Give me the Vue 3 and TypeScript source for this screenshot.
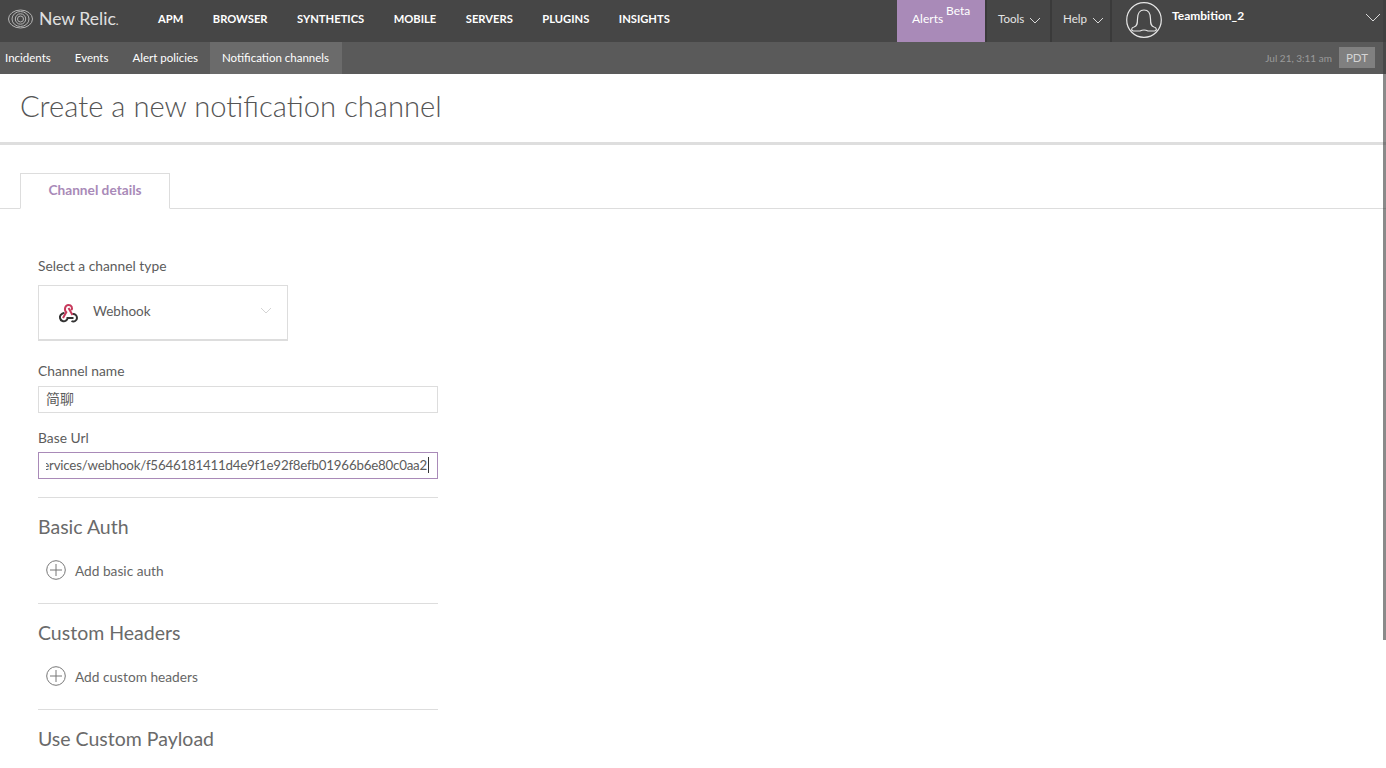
<template>
  <div class="page">
    <header class="topbar">
      <div class="brand">
        <svg class="brand-logo" width="25" height="20" viewBox="0 0 25 20" fill="none" stroke="#b5b5b5" stroke-width="1">
          <ellipse cx="12.500" cy="10" rx="12" ry="9" />
          <ellipse cx="12.500" cy="10" rx="8.500" ry="7.500" />
          <circle cx="12.500" cy="10" r="5.200" />
          <circle cx="12.500" cy="10" r="3" />
        </svg>
        <span class="brand-name">New Relic<small>.</small></span>
      </div>
      <nav class="main-nav">
        <a v-for="item in mainNav" :key="item">{{ item }}</a>
      </nav>
      <div class="top-right">
        <div class="alerts">Alerts<span class="beta">Beta</span></div>
        <div class="menu tools">Tools
          <svg class="chev" width="12" height="7" viewBox="0 0 12 7"><path d="M1 1l5 5 5-5" /></svg>
        </div>
        <div class="menu help">Help
          <svg class="chev" width="12" height="7" viewBox="0 0 12 7"><path d="M1 1l5 5 5-5" /></svg>
        </div>
        <div class="account">
          <svg class="avatar" width="36" height="36" viewBox="0 0 36 36" fill="none" stroke="#e6e6e6" stroke-width="1.200">
            <circle cx="18" cy="18" r="17.300" />
            <path d="M14 29H7.500C5 29 5 25.500 8 25c3-.7 3.500-3 3.500-8C11.500 11 14 8 18 8s6.500 3 6.500 9c0 5 .5 7.300 3.500 8 3 .5 3 4 .5 4H22Q18 27 14 29z" />
          </svg>
          <span class="account-name">Teambition_2</span>
          <svg class="account-chev" width="16" height="9" viewBox="0 0 16 9"><path d="M1 1l7 7 7-7" /></svg>
        </div>
      </div>
    </header>

    <div class="subbar">
      <nav class="sub-nav">
        <a v-for="item in subNav" :key="item" :class="{ active: item === 'Notification channels' }">{{ item }}</a>
      </nav>
      <div class="clock">
        <span>Jul 21, 3:11 am</span>
        <span class="tz">PDT</span>
      </div>
    </div>

    <h1 class="title">Create a new notification channel</h1>

    <div class="tabs">
      <div class="tab">Channel details</div>
    </div>

    <form class="form" @submit.prevent>
      <label class="label first">Select a channel type</label>
      <div class="select">
        <svg class="hook" width="21" height="20" viewBox="0 0 21 20" fill="none" stroke-width="2">
          <path d="M6.500 9.800C3 10.500 1.500 13 2 15c.5 3 4 4 6 2.500 1-.5 1.500-2 1.500-2.500h6" stroke="#333" />
          <path d="M14.500 11c2.500-.5 4.500 1.500 4.500 4s-3 4.500-5.500 3" stroke="#333" />
          <path d="M5 15l3.300-5.800C5.800 7 7 2 10.500 2c3 0 4.500 3 2.700 5.200" stroke="#c73a5c" />
          <path d="M10.500 5l4 7" stroke="#c73a5c" />
        </svg>
        <span class="select-text">Webhook</span>
        <svg class="select-chev" width="12" height="7" viewBox="0 0 12 7"><path d="M1 1l5 5 5-5" /></svg>
      </div>

      <label class="label name-label">Channel name</label>
      <div class="input">简聊</div>

      <label class="label url-label">Base Url</label>
      <div class="input focused">
        <div class="url-clip"><span class="url">services/webhook/f5646181411d4e9f1e92f8efb01966b6e80c0aa2</span></div>
        <span class="caret"></span>
      </div>

      <section class="block">
        <h2>Basic Auth</h2>
        <a class="add">
          <svg width="20" height="20" viewBox="0 0 20 20" fill="none" stroke="#777"><circle cx="10" cy="10" r="9.300" /><path d="M10 4v12M4 10h12" /></svg>
          Add basic auth
        </a>
      </section>

      <section class="block">
        <h2>Custom Headers</h2>
        <a class="add">
          <svg width="20" height="20" viewBox="0 0 20 20" fill="none" stroke="#777"><circle cx="10" cy="10" r="9.300" /><path d="M10 4v12M4 10h12" /></svg>
          Add custom headers
        </a>
      </section>

      <section class="block">
        <h2>Use Custom Payload</h2>
      </section>
    </form>

    <div class="scrollbar"></div>
  </div>
</template>

<script setup lang="ts">
const mainNav: string[] = ['APM', 'BROWSER', 'SYNTHETICS', 'MOBILE', 'SERVERS', 'PLUGINS', 'INSIGHTS']
const subNav: string[] = ['Incidents', 'Events', 'Alert policies', 'Notification channels']
</script>

<style>
html,
body {
  margin: 0;
  height: 768px;
  overflow: hidden;
  background: #fff;
}
</style>

<style scoped>
.page {
  position: relative;
  width: 1386px;
  height: 768px;
  overflow: hidden;
  font-family: Lato, "Noto Sans CJK SC", sans-serif;
  color: #5c5c5c;
}

.topbar {
  display: flex;
  height: 42px;
  background: #464646;
  color: #fff;
}
.brand {
  display: flex;
  align-items: center;
  width: 158px;
  height: 37px;
  padding-left: 8px;
  box-sizing: border-box;
}
.brand-logo {
  margin-right: 6px;
}
.brand-name {
  font-size: 17.600px;
  color: #e0e0e0;
}
.brand-name small {
  font-size: 12px;
}
.main-nav {
  display: flex;
  align-items: center;
  height: 37px;
  gap: 29.500px;
  font-size: 11.200px;
  font-weight: 700;
}
.top-right {
  display: flex;
  margin-left: auto;
  height: 42px;
}
.alerts {
  width: 88px;
  box-sizing: border-box;
  padding: 11px 0 0 15px;
  background: #a98ab8;
  font-size: 12px;
  position: relative;
}
.beta {
  position: absolute;
  left: 49px;
  top: 3px;
}
.menu {
  display: flex;
  align-items: center;
  gap: 5px;
  padding-bottom: 5px;
  box-sizing: border-box;
  font-size: 11.600px;
  color: #e4e4e4;
}
.tools {
  width: 65px;
  padding-left: 11px;
  border-left: 2px solid #3a3a3a;
}
.help {
  width: 60px;
  padding-left: 11px;
  border-left: 2px solid #3a3a3a;
}
.chev,
.account-chev,
.select-chev {
  fill: none;
  stroke: #d8d8d8;
  stroke-width: 1;
}
.chev {
  margin-top: 3px;
}
.account {
  display: flex;
  width: 276px;
  box-sizing: border-box;
  border-left: 2px solid #3a3a3a;
  padding-left: 14px;
}
.avatar {
  margin-top: 2px;
}
.account-name {
  margin: 8px 0 0 10px;
  font-size: 12px;
  font-weight: 700;
}
.account-chev {
  margin: 13px 5px 0 auto;
}

.subbar {
  display: flex;
  justify-content: space-between;
  height: 32px;
  background: #5a5a5a;
  color: #fff;
}
.sub-nav {
  display: flex;
  font-size: 11.500px;
}
.sub-nav a {
  display: flex;
  align-items: center;
  height: 30px;
  padding: 0 12px 2px;
}
.sub-nav a:first-child {
  padding-left: 5px;
}
.sub-nav a.active {
  padding-right: 13px;
  background: #6b6b6b;
}
.clock {
  display: flex;
  align-items: center;
  gap: 7px;
  padding: 0 11px 1px 0;
  font-size: 10px;
  color: #9a9a9a;
}
.tz {
  padding: 4px 7px;
  background: #808080;
  font-size: 11.500px;
  color: #d4d4d4;
}

.title {
  margin: 0;
  height: 71px;
  box-sizing: border-box;
  padding: 14px 0 0 20px;
  border-bottom: 3px solid #dedede;
  font-size: 29.200px;
  font-weight: 300;
  color: #555;
}

.tabs {
  height: 64px;
  box-sizing: border-box;
  padding: 28px 0 0 20px;
  border-bottom: 1px solid #ddd;
}
.tab {
  width: 150px;
  height: 36px;
  box-sizing: border-box;
  padding-top: 7px;
  border: 1px solid #ddd;
  border-bottom: 1px solid #fff;
  background: #fff;
  text-align: center;
  font-size: 13.700px;
  font-weight: 700;
  color: #a98ab8;
}

.form {
  width: 400px;
  margin-left: 38px;
  font-size: 13.800px;
}
.label {
  display: block;
  line-height: 16px;
}
.first {
  margin-top: 49px;
}
.select {
  display: flex;
  align-items: center;
  width: 250px;
  height: 56px;
  margin-top: 11px;
  box-sizing: border-box;
  padding: 0 15px 0 19px;
  border: 1px solid #ddd;
  border-bottom-width: 2px;
  font-size: 13.500px;
}
.hook {
  margin-right: 14px;
}
.select-text {
  margin-bottom: 4px;
}
.select-chev {
  margin: 0 0 4px auto;
  stroke: #d4d4d4;
}
.name-label {
  margin-top: 22px;
}
.input {
  display: flex;
  align-items: center;
  height: 27px;
  margin-top: 7px;
  box-sizing: border-box;
  padding: 0 7px 4px;
  border: 1px solid #ddd;
  font-size: 14px;
}
.url-label {
  margin-top: 17px;
}
.focused {
  margin-top: 6px;
  padding-bottom: 2px;
  padding-right: 8px;
  border-color: #a98ab8;
}
.url-clip {
  display: flex;
  justify-content: flex-end;
  flex: 1;
  min-width: 0;
  overflow: hidden;
}
.url {
  flex: none;
  white-space: nowrap;
  font-size: 13.300px;
  letter-spacing: -0.200px;
}
.caret {
  width: 1px;
  height: 16px;
  margin-left: 1px;
  background: #333;
  flex: none;
}
.block {
  margin-top: 18px;
  border-top: 1px solid #ddd;
  height: 87px;
}
.block h2 {
  margin: 17px 0 0;
  font-size: 19.500px;
  font-weight: 400;
  line-height: 24px;
  color: #6a6a6a;
}
.add {
  display: flex;
  align-items: center;
  gap: 9px;
  margin: 21px 0 0 8px;
  font-size: 13.700px;
  color: #666;
}

.scrollbar {
  position: absolute;
  top: 0;
  right: 0;
  width: 3px;
  height: 640px;
  background: rgba(60, 60, 60, 0.6);
}
</style>
